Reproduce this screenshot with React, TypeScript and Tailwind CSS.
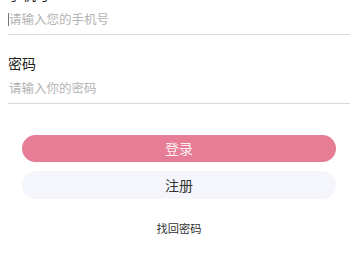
const font = "font-['Noto_Sans_CJK_SC','Noto_Sans',sans-serif]";

function Field({ label, placeholder, caret }: { label: string; placeholder: string; caret?: boolean }) {
  return (
    <div className="ml-[8px]">
      <div className="h-[20px] text-[14px] leading-[20px] text-[#222]">{label}</div>
      <div className="relative flex h-[31px] items-center border-b border-[#d9d9d9]">
        {caret && <span className="absolute left-0 top-[9px] h-[13px] w-px bg-[#777]" />}
        <span className="pl-px text-[12.5px] text-[#b3b3b3]">{placeholder}</span>
      </div>
    </div>
  );
}

export default function App() {
  return (
    <div className={`h-[266px] w-[350px] overflow-hidden bg-white ${font}`}>
      <div className="-mt-[16px] flex flex-col">
        <Field label="手机号" placeholder="请输入您的手机号" caret />
        <div className="mt-[18px]">
          <Field label="密码" placeholder="请输入你的密码" />
        </div>

        <div className="ml-[22px] mr-[14px] mt-[31px] flex flex-col">
          <button className="flex h-[27px] items-center justify-center rounded-full bg-[#e67c95] text-[14px] text-[#fdf0f3]">
            登录
          </button>
          <button className="mt-[9px] flex h-[28px] items-center justify-center rounded-full bg-[#f5f5fc] text-[14px] text-[#333]">
            注册
          </button>
          <div className="mt-[22px] text-center text-[11.25px] leading-[14px] text-[#333]">找回密码</div>
        </div>
      </div>
    </div>
  );
}
